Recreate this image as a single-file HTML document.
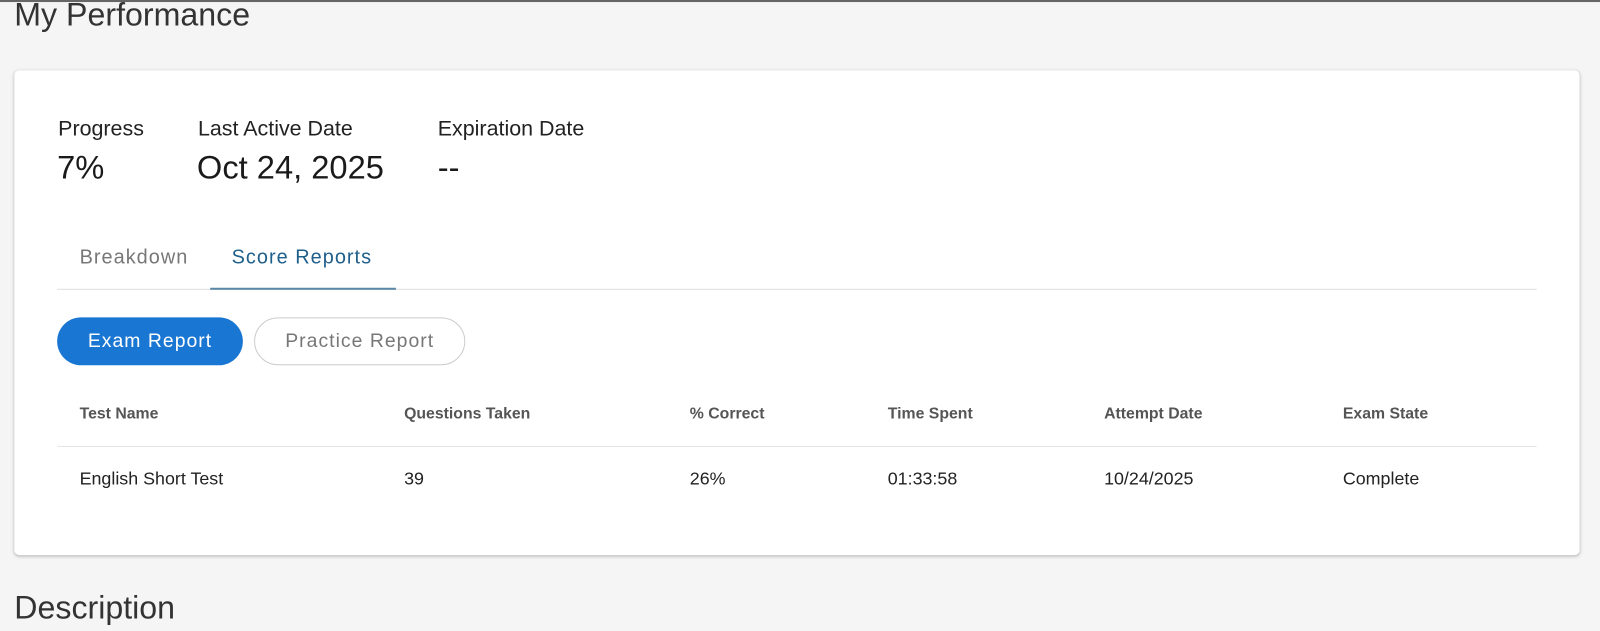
<!DOCTYPE html>
<html><head><style>
*{margin:0;padding:0;box-sizing:border-box}
body{width:1600px;height:631px;background:#f5f5f5;font-family:"Liberation Sans",sans-serif;position:relative;overflow:hidden;color:#222}
#w{position:absolute;left:0;top:0;width:1568px;height:618px;transform:scale(1.0204);transform-origin:0 0}
.a{position:absolute;white-space:nowrap}
.top{position:absolute;left:0;top:0;width:1568px;height:2px;background:#666}
.card{position:absolute;left:14px;top:69px;width:1534px;height:475px;background:#fff;border-radius:5px;box-shadow:0 1px 3px rgba(0,0,0,.25)}
.lbl{font-size:21px;color:#222}
.val{font-size:32px;color:#1a1a1a}
.th{font-size:15.5px;font-weight:bold;color:#555}
.td{font-size:17.5px;color:#222}
</style></head><body><div id="w">
<div class="top"></div>
<div class="a" style="left:14px;top:-4px;font-size:31.5px;color:#333">My Performance</div>
<div class="card"></div>
<div class="a lbl" style="left:57px;top:115px">Progress</div>
<div class="a lbl" style="left:194px;top:115px">Last Active Date</div>
<div class="a lbl" style="left:429px;top:115px">Expiration Date</div>
<div class="a val" style="left:56px;top:146px">7%</div>
<div class="a val" style="left:193px;top:146px">Oct 24, 2025</div>
<div class="a val" style="left:429px;top:146px">--</div>
<div class="a" style="left:78px;top:241px;font-size:19.5px;color:#777;letter-spacing:1px">Breakdown</div>
<div class="a" style="left:227px;top:241px;font-size:19.5px;color:#1f5f8b;letter-spacing:1px">Score Reports</div>
<div class="a" style="left:56px;top:283px;width:1450px;height:1px;background:#ddd"></div>
<div class="a" style="left:206px;top:282px;width:182px;height:2px;background:#5b88a8"></div>
<div class="a" style="left:56px;top:311px;width:182px;height:47px;border-radius:24px;background:#1976d2;color:#fff;font-size:19px;letter-spacing:1px;text-align:center;line-height:47px">Exam Report</div>
<div class="a" style="left:249px;top:311px;width:207px;height:47px;border-radius:24px;border:1px solid #ccc;color:#777;font-size:19px;letter-spacing:1px;text-align:center;line-height:45px">Practice Report</div>
<div class="a th" style="left:78px;top:397px">Test Name</div>
<div class="a th" style="left:396px;top:397px">Questions Taken</div>
<div class="a th" style="left:676px;top:397px">% Correct</div>
<div class="a th" style="left:870px;top:397px">Time Spent</div>
<div class="a th" style="left:1082px;top:397px">Attempt Date</div>
<div class="a th" style="left:1316px;top:397px">Exam State</div>
<div class="a" style="left:56px;top:437px;width:1450px;height:1px;background:#e5e5e5"></div>
<div class="a td" style="left:78px;top:459px">English Short Test</div>
<div class="a td" style="left:396px;top:459px">39</div>
<div class="a td" style="left:676px;top:459px">26%</div>
<div class="a td" style="left:870px;top:459px">01:33:58</div>
<div class="a td" style="left:1082px;top:459px">10/24/2025</div>
<div class="a td" style="left:1316px;top:459px">Complete</div>
<div class="a" style="left:14px;top:577px;font-size:31.5px;color:#333">Description</div>
</div></body></html>
